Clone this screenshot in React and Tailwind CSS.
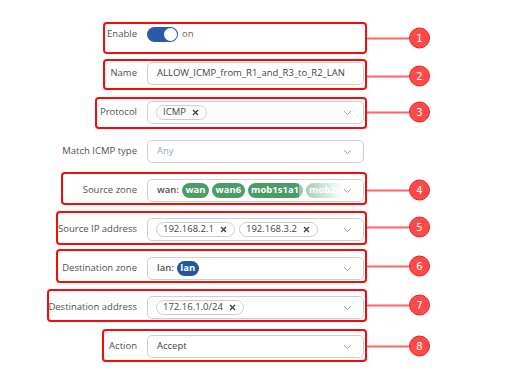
const notes = {
  1: { box: 'left-[103px] w-[264px] top-[-1px] h-[32px]', pin: 'top-[15px]' },
  2: { box: 'left-[103px] w-[264px] top-[-3px] h-[31px]', pin: 'top-[14px]' },
  3: { box: 'left-[95px] w-[272px] top-[-4px] h-[32px]', pin: 'top-[11px]' },
  4: { box: 'left-[61px] w-[306px] top-[-7px] h-[33px]', pin: 'top-[11px]' },
  5: { box: 'left-[56px] w-[311px] top-[-7px] h-[34px]', pin: 'top-[9px]' },
  6: { box: 'left-[56px] w-[311px] top-[-8px] h-[34px]', pin: 'top-[9px]' },
  7: { box: 'left-[47px] w-[320px] top-[-7px] h-[33px]', pin: 'top-[9px]' },
  8: { box: 'left-[102px] w-[265px] top-[-6px] h-[33px]', pin: 'top-[11px]' },
};

const Chevron = () => (
  <svg width="9" height="6" viewBox="0 0 9 6" fill="none" className="shrink-0">
    <path d="M1 1.2l3.5 3.3 3.5-3.3" stroke="#a3a3a3" strokeWidth="1" />
  </svg>
);

const Cross = () => (
  <svg width="7" height="7" viewBox="0 0 7 7" fill="none" className="shrink-0">
    <path d="M1 1l5 5M6 1l-5 5" stroke="#3a3a3a" strokeWidth="1.2" />
  </svg>
);

const Note = ({ n }) => {
  const { box, pin } = notes[n];
  return (
    <>
      <div className={`pointer-events-none absolute rounded-[4px] border-2 border-[#f40b0b] ${box}`} />
      <div className={`absolute left-[367px] flex -translate-y-1/2 items-center ${pin}`}>
        <div className="h-[2px] w-[42px] bg-[#ff6464]" />
        <div className="flex h-[21px] w-[21px] items-center justify-center rounded-full border border-[#e52222] bg-[#ff4a4a] font-['DejaVu_Sans',sans-serif] text-[10px] text-white">
          {n}
        </div>
      </div>
    </>
  );
};

const Row = ({ label, note, children }) => (
  <div className="relative flex h-[23px] items-center">
    <div className="w-[137px] text-right text-[#505050]">{label}</div>
    <div className="ml-[10px] flex h-full w-[217px] items-center">{children}</div>
    {note && <Note n={note} />}
  </div>
);

const Field = ({ children, chevron = true }) => (
  <div className="flex h-full w-full items-center rounded-[5px] border border-[#cfcfcf] bg-white pl-[8px] pr-[11px]">
    <div className="relative flex min-w-0 flex-1 items-center gap-[4px] overflow-hidden whitespace-nowrap">
      {children}
    </div>
    {chevron && <Chevron />}
  </div>
);

const Tag = ({ text }) => (
  <span className="flex h-[15px] shrink-0 items-center gap-[6px] rounded-full border border-[#cdcdcd] pl-[6px] pr-[7px] text-[#444]">
    {text}
    <Cross />
  </span>
);

const Zone = ({ text, color }) => (
  <span className={`flex h-[15px] shrink-0 items-center rounded-full px-[3.5px] font-bold text-white ${color}`}>
    {text}
  </span>
);

export default function App() {
  return (
    <div className="h-[380px] w-[505px] overflow-hidden bg-white font-['Open_Sans',sans-serif] text-[9.5px]">
      <div className="flex flex-col gap-[16px] pt-[23px]">
        <Row label="Enable" note={1}>
          <div className="flex items-center gap-[4px]">
            <div className="relative h-[15px] w-[31px] rounded-full bg-[#2d5aa6]">
              <div className="absolute right-[1px] top-[1px] h-[13px] w-[13px] rounded-full bg-white" />
            </div>
            <span className="text-[#666]">on</span>
          </div>
        </Row>
        <Row label="Name" note={2}>
          <Field chevron={false}>
            <span className="pl-[1px] text-[#444]">ALLOW_ICMP_from_R1_and_R3_to_R2_LAN</span>
          </Field>
        </Row>
        <Row label="Protocol" note={3}>
          <Field>
            <Tag text="ICMP" />
          </Field>
        </Row>
        <Row label="Match ICMP type">
          <Field>
            <span className="pl-[1px] text-[#9aa6b8]">Any</span>
          </Field>
        </Row>
        <Row label="Source zone" note={4}>
          <Field>
            <div className="flex items-center gap-[3px]">
              <span className="pl-[1px] font-semibold text-[#505050]">wan:</span>
              <Zone text="wan" color="bg-[#4c9b6b]" />
              <Zone text="wan6" color="bg-[#4c9b6b]" />
              <Zone text="mob1s1a1" color="bg-[#4c9b6b]" />
              <Zone text="mob2s1a1" color="bg-[#4c9b6b]" />
            </div>
            <div className="absolute inset-y-0 right-0 w-[44px] bg-linear-to-r from-white/40 to-white" />
          </Field>
        </Row>
        <Row label="Source IP address" note={5}>
          <Field>
            <Tag text="192.168.2.1" />
            <Tag text="192.168.3.2" />
          </Field>
        </Row>
        <Row label="Destination zone" note={6}>
          <Field>
            <div className="flex items-center gap-[3px]">
              <span className="pl-[1px] font-semibold text-[#505050]">lan:</span>
              <Zone text="lan" color="bg-[#2456a4]" />
            </div>
          </Field>
        </Row>
        <Row label="Destination address" note={7}>
          <Field>
            <Tag text="172.16.1.0/24" />
          </Field>
        </Row>
        <Row label="Action" note={8}>
          <Field>
            <span className="pl-[1px] text-[#444]">Accept</span>
          </Field>
        </Row>
      </div>
    </div>
  );
}
